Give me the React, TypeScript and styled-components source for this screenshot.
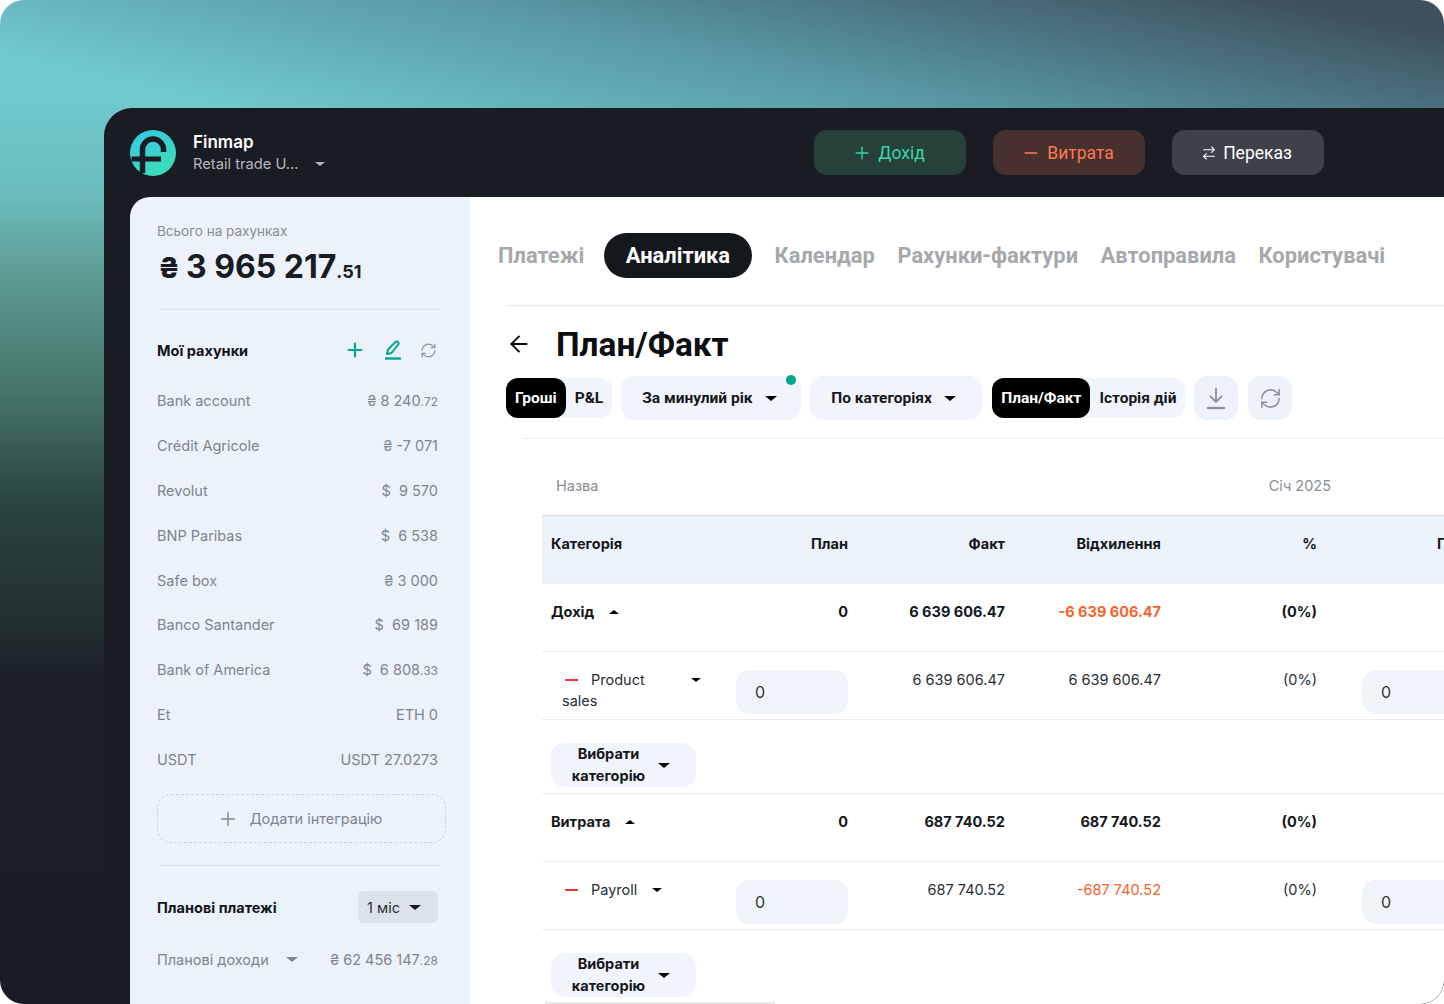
import { createGlobalStyle } from 'styled-components';
import styled from 'styled-components';
import { ArrowLeft, ArrowRightLeft, Minus, Plus, RefreshCw } from 'lucide-react';

const GlobalStyle = createGlobalStyle`
	html, body {
		margin: 0;
		background: #fff;
	}
	* {
		box-sizing: border-box;
	}
`;

const Stage = styled.div`
	width: 1444px;
	height: 1004px;
	padding: 108px 0 0 104px;
	overflow: hidden;
	border-radius: 24px;
	font-family: Inter, 'Noto Sans', sans-serif;
	background:
		linear-gradient(11.5deg, rgba(62, 90, 105, 0) 12%, rgba(66, 110, 128, 0.55) 50%, rgba(62, 80, 92, 1) 92%) 0 0 / 100% 108px no-repeat,
		linear-gradient(180deg, #74cdd3 0%, #70c9ce 10%, #6abbb9 20%, #5f9d95 27%, #467569 39%, #2a4440 50%, #222f30 62%, #1b2028 67.5%, #191c24 100%);
`;

const Frame = styled.div`
	width: 1340px;
	height: 896px;
	border-radius: 28px 0 0 0;
	background: #191c23;
	overflow: hidden;
`;

const Header = styled.header`
	height: 89px;
	padding-left: 26px;
	display: flex;
	align-items: center;
`;

const Brand = styled.div`
	width: 684px;
	display: flex;
	align-items: center;
	gap: 17px;
`;

const BrandName = styled.div`
	font-size: 17px;
	font-weight: 600;
	line-height: 22px;
	color: #fff;
`;

const BrandSub = styled.div`
	display: flex;
	align-items: center;
	gap: 16px;
	font-size: 14.7px;
	line-height: 22px;
	color: #b4b8bd;
`;

const Actions = styled.div`
	display: flex;
	gap: 27px;
`;

const ActionButton = styled.button<{ $bg: string; $fg: string }>`
	width: 152px;
	height: 45px;
	padding: 0 3px 0 0;
	border: 0;
	border-radius: 13px;
	background: ${(p) => p.$bg};
	color: ${(p) => p.$fg};
	display: flex;
	align-items: center;
	justify-content: center;
	gap: 6px;
	font-family: Roboto, sans-serif;
	font-size: 17.5px;
`;

const Caret = styled.span<{ $size?: number; $color?: string; $up?: boolean }>`
	display: inline-block;
	flex: none;
	width: 0;
	height: 0;
	border-left: ${(p) => p.$size ?? 5}px solid transparent;
	border-right: ${(p) => p.$size ?? 5}px solid transparent;
	${(p) => (p.$up ? 'border-bottom' : 'border-top')}: ${(p) => (p.$size ?? 5) * 0.9}px solid ${(p) => p.$color ?? '#000'};
`;

const Body = styled.div`
	display: flex;
	padding-left: 26px;
	height: 807px;
`;

const Sidebar = styled.aside`
	width: 340px;
	flex: none;
	background: #ebf2fa;
	border-radius: 20px 0 0 0;
	padding: 26px 32px 0 27px;
	font-size: 14.5px;
`;

const TotalLabel = styled.div`
	font-size: 13.5px;
	line-height: 16px;
	color: #868d96;
`;

const TotalValue = styled.div`
	margin-top: 8px;
	padding-left: 1px;
	font-size: 32px;
	font-weight: 700;
	line-height: 40px;
	color: #191c23;
	small {
		font-size: 18px;
		line-height: 0;
	}
`;

const Hryvnia = styled.span`
	margin-right: 6px;
	font-weight: 800;
	font-size: 28px;
	line-height: 0;
`;

const Rule = styled.div`
	height: 1px;
	margin-left: 3px;
	margin-right: -2px;
	background: #d5dde6;
`;

const TotalRule = styled(Rule)`
	margin-top: 22px;
`;

const SectionHead = styled.div`
	margin-top: 28px;
	height: 24px;
	display: flex;
	align-items: center;
	justify-content: space-between;
	font-weight: 700;
	color: #12151a;
`;

const HeadIcons = styled.div`
	display: flex;
	align-items: center;
	gap: 18px;
	padding-right: 1px;
`;

const Accounts = styled.div`
	margin-top: 16px;
`;

const AccountRow = styled.div`
	height: 44.9px;
	display: flex;
	align-items: center;
	justify-content: space-between;
	color: #7c8590;
	small {
		font-size: 12px;
	}
`;

const AddBox = styled.div`
	margin-top: 12px;
	margin-right: -8px;
	padding-right: 4px;
	height: 49px;
	border: 1px dashed #c9d1da;
	border-radius: 14px;
	display: flex;
	align-items: center;
	justify-content: center;
	gap: 11px;
	color: #7c8590;
`;

const PlanRule = styled(Rule)`
	margin-top: 22px;
`;

const PlanHead = styled.div`
	margin-top: 25px;
	height: 32px;
	display: flex;
	align-items: center;
	justify-content: space-between;
	font-weight: 700;
	color: #12151a;
`;

const PeriodChip = styled.div`
	width: 80px;
	height: 32px;
	border-radius: 6px;
	background: #dbe2ea;
	padding-left: 9px;
	display: flex;
	align-items: center;
	gap: 9px;
	font-weight: 400;
	color: #2a2e35;
`;

const PlanRow = styled.div`
	margin-top: 20px;
	height: 32px;
	display: flex;
	align-items: center;
	justify-content: space-between;
	color: #7c8590;
	small {
		font-size: 12px;
	}
`;

const PlanLabel = styled.span`
	display: flex;
	align-items: center;
	gap: 17px;
`;

const Main = styled.main`
	flex: 1;
	min-width: 0;
	background: #fff;
	padding: 36px 0 0 28px;
	overflow: hidden;
`;

const Tabs = styled.nav`
	display: flex;
	align-items: center;
	gap: 22.5px;
	height: 45px;
	font-family: Roboto, sans-serif;
	font-size: 21.9px;
	font-weight: 700;
	color: #a6a8ab;
`;

const Tab = styled.span<{ $active?: boolean }>`
	${(p) =>
		p.$active &&
		`
		height: 45px;
		margin-left: -3px;
		padding: 0 22px;
		display: flex;
		align-items: center;
		border-radius: 23px;
		background: #14171c;
		color: #fff;
	`}
`;

const TabsRule = styled.div`
	height: 1px;
	margin: 27px 0 0 8px;
	background: #e8eaed;
`;

const TitleRow = styled.div`
	margin: 17px 0 0 8px;
	height: 42px;
	display: flex;
	align-items: center;
	gap: 24px;
`;

const Title = styled.h1`
	margin: 0;
	font-family: Roboto, sans-serif;
	font-size: 33.4px;
	font-weight: 700;
	color: #0b0d10;
`;

const Filters = styled.div`
	margin: 11px 0 0 8px;
	height: 44px;
	display: flex;
	align-items: center;
	font-family: Roboto, sans-serif;
	font-size: 15.5px;
	font-weight: 700;
	color: #14171c;
`;

const Segment = styled.div<{ $gap: number }>`
	height: 40px;
	margin-right: ${(p) => p.$gap}px;
	display: flex;
	align-items: center;
	border-radius: 12px;
	background: #f1f4fa;
`;

const SegmentItem = styled.span<{ $active?: boolean }>`
	height: 40px;
	padding: 0 9px;
	display: flex;
	align-items: center;
	border-radius: 12px;
	background: ${(p) => (p.$active ? '#000' : 'transparent')};
	color: ${(p) => (p.$active ? '#fff' : '#14171c')};
`;

const Dropdown = styled.div<{ $width: number; $gap: number }>`
	position: relative;
	width: ${(p) => p.$width}px;
	height: 44px;
	margin-right: ${(p) => p.$gap}px;
	padding-left: 21px;
	border-radius: 13px;
	background: #f1f4fa;
	display: flex;
	align-items: center;
	gap: 12px;
`;

const Dot = styled.span`
	position: absolute;
	top: -1px;
	right: 5px;
	width: 10px;
	height: 10px;
	border-radius: 50%;
	background: #00a68e;
`;

const IconButton = styled.div`
	width: 44px;
	height: 44px;
	margin-right: 10px;
	border-radius: 13px;
	background: #edf1f8;
	display: flex;
	align-items: center;
	justify-content: center;
	color: #89919a;
`;

const FiltersRule = styled.div`
	height: 1px;
	margin: 18px 0 0 25px;
	background: #eceef0;
`;

const Table = styled.div`
	margin-left: 44px;
	width: 941px;
	font-size: 14.5px;
	line-height: 17px;
	color: #2a2e35;
`;

const Grid = styled.div`
	display: grid;
	grid-template-columns: 185px 130px 157px 156px 156px 157px;
`;

const PeriodRow = styled(Grid)`
	height: 76px;
	align-items: center;
	padding-top: 17px;
	color: #868d96;
`;

const PeriodName = styled.div`
	grid-column: 1 / 3;
	padding-left: 14px;
`;

const PeriodMonth = styled.div`
	grid-column: 3 / 6;
	text-align: right;
	margin-right: -5px;
`;

const HeadRow = styled(Grid)`
	height: 68px;
	align-items: center;
	padding-bottom: 12px;
	background: #ebf2fa;
	border-top: 1px solid #d5dbe2;
	font-weight: 700;
	color: #14171c;
`;

const HeadName = styled.div`
	padding-left: 9px;
`;

const Row = styled(Grid)<{ $height: number }>`
	height: ${(p) => p.$height}px;
	border-top: 1px solid #eaecef;
	padding-top: 19px;
`;

const GroupRow = styled(Row)`
	font-weight: 700;
	color: #14171c;
`;

const Num = styled.div<{ $red?: boolean }>`
	padding-right: 9px;
	text-align: right;
	color: ${(p) => (p.$red ? '#f4642c' : 'inherit')};
`;

const GroupName = styled.div`
	padding-left: 9px;
	height: 17px;
	display: flex;
	align-items: center;
	gap: 15px;
`;

const Cat = styled.div`
	margin-top: -2px;
	padding-left: 20px;
	line-height: 21px;
`;

const CatLine = styled.div`
	display: flex;
	align-items: center;
`;

const CatMinus = styled.span`
	width: 13px;
	height: 2px;
	margin: 0 13px 0 3px;
	background: #f5313d;
`;

const CatSpacer = styled.span<{ $width: number }>`
	width: ${(p) => p.$width}px;
`;

const InputBox = styled.div`
	justify-self: end;
	margin: -1px 9px 0 0;
	padding-left: 19px;
	width: 112px;
	height: 44px;
	border-radius: 14px;
	background: #f0f3f9;
	display: flex;
	align-items: center;
	font-size: 16px;
	color: #333;
`;

const ChooseRow = styled.div<{ $height: number }>`
	height: ${(p) => p.$height}px;
	border-top: 1px solid #eaecef;
	padding: 23px 0 0 9px;
`;

const ChooseButton = styled.div`
	width: 145px;
	height: 44px;
	padding-right: 5px;
	border-radius: 14px;
	background: #f1f4fa;
	display: flex;
	align-items: center;
	justify-content: center;
	gap: 13px;
	font-weight: 700;
	line-height: 22px;
	text-align: center;
	color: #14171c;
`;

const EndRule = styled.div`
	width: 230px;
	height: 2px;
	margin-left: 3px;
	background: #e4e6ea;
`;

const accounts: [string, string, string?][] = [
	['Bank account', '₴ 8 240', '.72'],
	['Crédit Agricole', '₴ -7 071'],
	['Revolut', '$\u00a0\u00a09 570'],
	['BNP Paribas', '$\u00a0\u00a06 538'],
	['Safe box', '₴ 3 000'],
	['Banco Santander', '$\u00a0\u00a069 189'],
	['Bank of America', '$\u00a0\u00a06 808', '.33'],
	['Et', 'ETH 0'],
	['USDT', 'USDT 27.0273'],
];

function Logo() {
	return (
		<svg width="46" height="46" viewBox="0 0 46 46" style={{ flex: 'none' }}>
			<defs>
				<linearGradient id="logoFill" x1="0.2" y1="0" x2="0.8" y2="1">
					<stop offset="0" stopColor="#36c8e4" />
					<stop offset="1" stopColor="#3bdfb4" />
				</linearGradient>
			</defs>
			<circle cx="23" cy="23" r="23" fill="url(#logoFill)" />
			<path d="M12.5 43V19.5A10.5 10.5 0 0 1 33.5 19.5V22" fill="none" stroke="#191c23" strokeWidth="5.5" />
			<path d="M1.5 29H31" fill="none" stroke="#191c23" strokeWidth="5" />
		</svg>
	);
}

function PencilLine() {
	return (
		<svg width="18" height="20" viewBox="0 0 18 20" fill="none" stroke="#00a68e" strokeWidth="2">
			<path d="M3 14 4 9.5 11.5 2a1.8 1.8 0 0 1 3 .8l.2 1.2L7.5 13Z" strokeLinejoin="round" />
			<path d="M1 18.5H17" strokeWidth="2.4" />
		</svg>
	);
}

function DownloadLine() {
	return (
		<svg width="20" height="24" viewBox="0 0 20 24" fill="none" stroke="currentColor" strokeWidth="1.8">
			<path d="M10 2V15M4 10l6 6 6-6" />
			<path d="M1 22H19" strokeWidth="2.2" />
		</svg>
	);
}

export default function App() {
	return (
		<Stage>
			<GlobalStyle />
			<Frame>
				<Header>
					<Brand>
						<Logo />
						<div>
							<BrandName>Finmap</BrandName>
							<BrandSub>
								Retail trade U...
								<Caret $color="#b4b8bd" />
							</BrandSub>
						</div>
					</Brand>
					<Actions>
						<ActionButton $bg="#25413a" $fg="#3bd6a8">
							<Plus size={20} strokeWidth={1.6} />
							Дохід
						</ActionButton>
						<ActionButton $bg="#47302d" $fg="#ff7a50">
							<Minus size={20} strokeWidth={1.6} />
							Витрата
						</ActionButton>
						<ActionButton $bg="#3e4149" $fg="#fff">
							<ArrowRightLeft size={16} strokeWidth={1.6} />
							Переказ
						</ActionButton>
					</Actions>
				</Header>
				<Body>
					<Sidebar>
						<TotalLabel>Всього на рахунках</TotalLabel>
						<TotalValue>
							<Hryvnia>₴</Hryvnia>3 965 217<small>.51</small>
						</TotalValue>
						<TotalRule />
						<SectionHead>
							Мої рахунки
							<HeadIcons>
								<Plus size={22} color="#00a68e" strokeWidth={2.4} />
								<PencilLine />
								<RefreshCw size={17} color="#8f969e" strokeWidth={1.7} />
							</HeadIcons>
						</SectionHead>
						<Accounts>
							{accounts.map(([name, amount, cents]) => (
								<AccountRow key={name}>
									<span>{name}</span>
									<span>
										{amount}
										{cents && <small>{cents}</small>}
									</span>
								</AccountRow>
							))}
						</Accounts>
						<AddBox>
							<Plus size={22} strokeWidth={1.5} />
							Додати інтеграцію
						</AddBox>
						<PlanRule />
						<PlanHead>
							Планові платежі
							<PeriodChip>
								1 міс
								<Caret $size={6} $color="#14171c" />
							</PeriodChip>
						</PlanHead>
						<PlanRow>
							<PlanLabel>
								Планові доходи
								<Caret $size={6} $color="#7c8590" />
							</PlanLabel>
							<span>
								₴ 62 456 147<small>.28</small>
							</span>
						</PlanRow>
					</Sidebar>
					<Main>
						<Tabs>
							<Tab>Платежі</Tab>
							<Tab $active>Аналітика</Tab>
							<Tab>Календар</Tab>
							<Tab>Рахунки-фактури</Tab>
							<Tab>Автоправила</Tab>
							<Tab>Користувачі</Tab>
						</Tabs>
						<TabsRule />
						<TitleRow>
							<ArrowLeft size={26} strokeWidth={1.8} color="#0b0d10" />
							<Title>План/Факт</Title>
						</TitleRow>
						<Filters>
							<Segment $gap={9}>
								<SegmentItem $active>Гроші</SegmentItem>
								<SegmentItem>P&amp;L</SegmentItem>
							</Segment>
							<Dropdown $width={180} $gap={9}>
								За минулий рік
								<Caret $size={6} />
								<Dot />
							</Dropdown>
							<Dropdown $width={172} $gap={10}>
								По категоріях
								<Caret $size={6} />
							</Dropdown>
							<Segment $gap={9}>
								<SegmentItem $active>План/Факт</SegmentItem>
								<SegmentItem>Історія дій</SegmentItem>
							</Segment>
							<IconButton>
								<DownloadLine />
							</IconButton>
							<IconButton>
								<RefreshCw size={23} strokeWidth={1.6} />
							</IconButton>
						</Filters>
						<FiltersRule />
						<Table>
							<PeriodRow>
								<PeriodName>Назва</PeriodName>
								<PeriodMonth>Січ 2025</PeriodMonth>
							</PeriodRow>
							<HeadRow>
								<HeadName>Категорія</HeadName>
								<Num>План</Num>
								<Num>Факт</Num>
								<Num>Відхилення</Num>
								<Num>%</Num>
								<Num>План</Num>
							</HeadRow>
							<GroupRow $height={68}>
								<GroupName>
									Дохід
									<Caret $up />
								</GroupName>
								<Num>0</Num>
								<Num>6 639 606.47</Num>
								<Num $red>-6 639 606.47</Num>
								<Num>(0%)</Num>
							</GroupRow>
							<Row $height={68}>
								<Cat>
									<CatLine>
										<CatMinus />
										Product
										<CatSpacer $width={46} />
										<Caret />
									</CatLine>
									sales
								</Cat>
								<InputBox>0</InputBox>
								<Num>6 639 606.47</Num>
								<Num>6 639 606.47</Num>
								<Num>(0%)</Num>
								<InputBox>0</InputBox>
							</Row>
							<ChooseRow $height={74}>
								<ChooseButton>
									<div>
										Вибрати
										<br />
										категорію
									</div>
									<Caret $size={6} />
								</ChooseButton>
							</ChooseRow>
							<GroupRow $height={68}>
								<GroupName>
									Витрата
									<Caret $up />
								</GroupName>
								<Num>0</Num>
								<Num>687 740.52</Num>
								<Num>687 740.52</Num>
								<Num>(0%)</Num>
							</GroupRow>
							<Row $height={68}>
								<Cat>
									<CatLine>
										<CatMinus />
										Payroll
										<CatSpacer $width={15} />
										<Caret />
									</CatLine>
								</Cat>
								<InputBox>0</InputBox>
								<Num>687 740.52</Num>
								<Num $red>-687 740.52</Num>
								<Num>(0%)</Num>
								<InputBox>0</InputBox>
							</Row>
							<ChooseRow $height={73}>
								<ChooseButton>
									<div>
										Вибрати
										<br />
										категорію
									</div>
									<Caret $size={6} />
								</ChooseButton>
							</ChooseRow>
							<EndRule />
						</Table>
					</Main>
				</Body>
			</Frame>
		</Stage>
	);
}
